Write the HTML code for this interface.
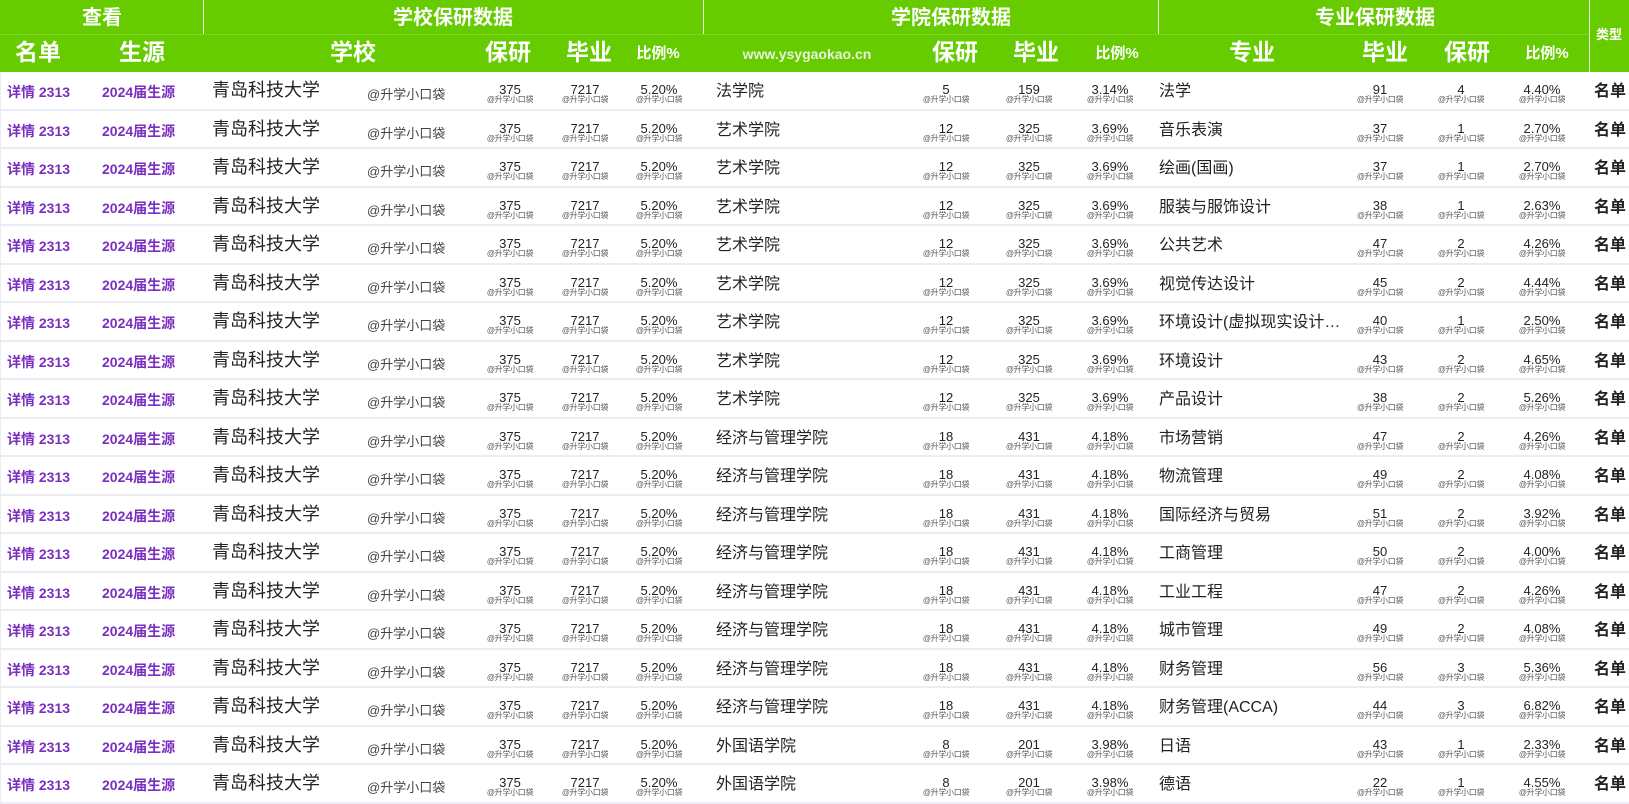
<!DOCTYPE html>
<html><head><meta charset="utf-8"><style>
*{margin:0;padding:0;box-sizing:border-box}
body{width:1629px;height:794px;overflow:hidden;background:#fff;font-family:"Liberation Sans","Noto Sans CJK SC",sans-serif;position:relative}
.g{position:absolute;background:#66cc00}
.h{position:absolute;color:#fff;font-weight:bold;transform:translateX(-50%);white-space:nowrap;line-height:1}
.vl{position:absolute;background:#e8f6dc;width:1px}
.r{position:absolute;left:0;width:1629px;height:38.5px;border-bottom:2px solid #ececf7;border-left:1px solid #ececf7}
.r span{position:absolute;white-space:nowrap;line-height:1}
.p{color:#7a2fc0;font-weight:bold;font-size:14px;top:13px}
.s{font-size:18px;color:#222;top:9px;left:211px}
.w{font-size:13px;color:#444;left:366px;top:16px}
.t{font-size:16px;color:#222;top:12px}
.n{transform:translateX(-50%);text-align:center;top:11px;font-size:13px;color:#222}
.n i{display:block;font-style:normal;font-size:8px;color:#555;margin-top:0px;letter-spacing:-0.3px}
.m{font-size:16px;font-weight:bold;color:#222;left:1593px;top:12px}
</style></head><body>
<div class="g" style="left:0;top:0;width:1629px;height:72px"></div>
<div class="vl" style="left:203px;top:0;height:34px"></div>
<div class="vl" style="left:703px;top:0;height:34px"></div>
<div class="vl" style="left:1158px;top:0;height:34px"></div>
<div class="vl" style="left:1589px;top:0;height:72px"></div>
<div class="vl" style="left:0;top:34px;width:1589px;height:1px;background:#7fd62a"></div>
<div class="h" style="left:102px;top:8px;font-size:20px">查看</div>
<div class="h" style="left:453px;top:8px;font-size:20px">学校保研数据</div>
<div class="h" style="left:951px;top:8px;font-size:20px">学院保研数据</div>
<div class="h" style="left:1375px;top:8px;font-size:20px">专业保研数据</div>
<div class="h" style="left:1609px;top:28px;font-size:13px">类型</div>
<div class="h" style="left:38px;top:41px;font-size:23px">名单</div>
<div class="h" style="left:142px;top:41px;font-size:23px">生源</div>
<div class="h" style="left:353px;top:41px;font-size:23px">学校</div>
<div class="h" style="left:508px;top:41px;font-size:23px">保研</div>
<div class="h" style="left:589px;top:41px;font-size:23px">毕业</div>
<div class="h" style="left:658px;top:46px;font-size:15px">比例%</div>
<div class="h" style="left:807px;top:47px;font-size:14px;color:#e6f3da">www.ysygaokao.cn</div>
<div class="h" style="left:955px;top:41px;font-size:23px">保研</div>
<div class="h" style="left:1036px;top:41px;font-size:23px">毕业</div>
<div class="h" style="left:1117px;top:46px;font-size:15px">比例%</div>
<div class="h" style="left:1252px;top:41px;font-size:23px">专业</div>
<div class="h" style="left:1385px;top:41px;font-size:23px">毕业</div>
<div class="h" style="left:1467px;top:41px;font-size:23px">保研</div>
<div class="h" style="left:1547px;top:46px;font-size:15px">比例%</div>

<div class="r" style="top:72px"><span class="p" style="left:6px">详情 2313</span><span class="p" style="left:101px">2024届生源</span><span class="s">青岛科技大学</span><span class="w">@升学小口袋</span><span class="n" style="left:509px">375<i>@升学小口袋</i></span><span class="n" style="left:584px">7217<i>@升学小口袋</i></span><span class="n" style="left:658px">5.20%<i>@升学小口袋</i></span><span class="t" style="left:715px">法学院</span><span class="n" style="left:945px">5<i>@升学小口袋</i></span><span class="n" style="left:1028px">159<i>@升学小口袋</i></span><span class="n" style="left:1109px">3.14%<i>@升学小口袋</i></span><span class="t" style="left:1158px">法学</span><span class="n" style="left:1379px">91<i>@升学小口袋</i></span><span class="n" style="left:1460px">4<i>@升学小口袋</i></span><span class="n" style="left:1541px">4.40%<i>@升学小口袋</i></span><span class="m">名单</span></div>
<div class="r" style="top:110.5px"><span class="p" style="left:6px">详情 2313</span><span class="p" style="left:101px">2024届生源</span><span class="s">青岛科技大学</span><span class="w">@升学小口袋</span><span class="n" style="left:509px">375<i>@升学小口袋</i></span><span class="n" style="left:584px">7217<i>@升学小口袋</i></span><span class="n" style="left:658px">5.20%<i>@升学小口袋</i></span><span class="t" style="left:715px">艺术学院</span><span class="n" style="left:945px">12<i>@升学小口袋</i></span><span class="n" style="left:1028px">325<i>@升学小口袋</i></span><span class="n" style="left:1109px">3.69%<i>@升学小口袋</i></span><span class="t" style="left:1158px">音乐表演</span><span class="n" style="left:1379px">37<i>@升学小口袋</i></span><span class="n" style="left:1460px">1<i>@升学小口袋</i></span><span class="n" style="left:1541px">2.70%<i>@升学小口袋</i></span><span class="m">名单</span></div>
<div class="r" style="top:149px"><span class="p" style="left:6px">详情 2313</span><span class="p" style="left:101px">2024届生源</span><span class="s">青岛科技大学</span><span class="w">@升学小口袋</span><span class="n" style="left:509px">375<i>@升学小口袋</i></span><span class="n" style="left:584px">7217<i>@升学小口袋</i></span><span class="n" style="left:658px">5.20%<i>@升学小口袋</i></span><span class="t" style="left:715px">艺术学院</span><span class="n" style="left:945px">12<i>@升学小口袋</i></span><span class="n" style="left:1028px">325<i>@升学小口袋</i></span><span class="n" style="left:1109px">3.69%<i>@升学小口袋</i></span><span class="t" style="left:1158px">绘画(国画)</span><span class="n" style="left:1379px">37<i>@升学小口袋</i></span><span class="n" style="left:1460px">1<i>@升学小口袋</i></span><span class="n" style="left:1541px">2.70%<i>@升学小口袋</i></span><span class="m">名单</span></div>
<div class="r" style="top:187.5px"><span class="p" style="left:6px">详情 2313</span><span class="p" style="left:101px">2024届生源</span><span class="s">青岛科技大学</span><span class="w">@升学小口袋</span><span class="n" style="left:509px">375<i>@升学小口袋</i></span><span class="n" style="left:584px">7217<i>@升学小口袋</i></span><span class="n" style="left:658px">5.20%<i>@升学小口袋</i></span><span class="t" style="left:715px">艺术学院</span><span class="n" style="left:945px">12<i>@升学小口袋</i></span><span class="n" style="left:1028px">325<i>@升学小口袋</i></span><span class="n" style="left:1109px">3.69%<i>@升学小口袋</i></span><span class="t" style="left:1158px">服装与服饰设计</span><span class="n" style="left:1379px">38<i>@升学小口袋</i></span><span class="n" style="left:1460px">1<i>@升学小口袋</i></span><span class="n" style="left:1541px">2.63%<i>@升学小口袋</i></span><span class="m">名单</span></div>
<div class="r" style="top:226px"><span class="p" style="left:6px">详情 2313</span><span class="p" style="left:101px">2024届生源</span><span class="s">青岛科技大学</span><span class="w">@升学小口袋</span><span class="n" style="left:509px">375<i>@升学小口袋</i></span><span class="n" style="left:584px">7217<i>@升学小口袋</i></span><span class="n" style="left:658px">5.20%<i>@升学小口袋</i></span><span class="t" style="left:715px">艺术学院</span><span class="n" style="left:945px">12<i>@升学小口袋</i></span><span class="n" style="left:1028px">325<i>@升学小口袋</i></span><span class="n" style="left:1109px">3.69%<i>@升学小口袋</i></span><span class="t" style="left:1158px">公共艺术</span><span class="n" style="left:1379px">47<i>@升学小口袋</i></span><span class="n" style="left:1460px">2<i>@升学小口袋</i></span><span class="n" style="left:1541px">4.26%<i>@升学小口袋</i></span><span class="m">名单</span></div>
<div class="r" style="top:264.5px"><span class="p" style="left:6px">详情 2313</span><span class="p" style="left:101px">2024届生源</span><span class="s">青岛科技大学</span><span class="w">@升学小口袋</span><span class="n" style="left:509px">375<i>@升学小口袋</i></span><span class="n" style="left:584px">7217<i>@升学小口袋</i></span><span class="n" style="left:658px">5.20%<i>@升学小口袋</i></span><span class="t" style="left:715px">艺术学院</span><span class="n" style="left:945px">12<i>@升学小口袋</i></span><span class="n" style="left:1028px">325<i>@升学小口袋</i></span><span class="n" style="left:1109px">3.69%<i>@升学小口袋</i></span><span class="t" style="left:1158px">视觉传达设计</span><span class="n" style="left:1379px">45<i>@升学小口袋</i></span><span class="n" style="left:1460px">2<i>@升学小口袋</i></span><span class="n" style="left:1541px">4.44%<i>@升学小口袋</i></span><span class="m">名单</span></div>
<div class="r" style="top:303px"><span class="p" style="left:6px">详情 2313</span><span class="p" style="left:101px">2024届生源</span><span class="s">青岛科技大学</span><span class="w">@升学小口袋</span><span class="n" style="left:509px">375<i>@升学小口袋</i></span><span class="n" style="left:584px">7217<i>@升学小口袋</i></span><span class="n" style="left:658px">5.20%<i>@升学小口袋</i></span><span class="t" style="left:715px">艺术学院</span><span class="n" style="left:945px">12<i>@升学小口袋</i></span><span class="n" style="left:1028px">325<i>@升学小口袋</i></span><span class="n" style="left:1109px">3.69%<i>@升学小口袋</i></span><span class="t" style="left:1158px">环境设计(虚拟现实设计…</span><span class="n" style="left:1379px">40<i>@升学小口袋</i></span><span class="n" style="left:1460px">1<i>@升学小口袋</i></span><span class="n" style="left:1541px">2.50%<i>@升学小口袋</i></span><span class="m">名单</span></div>
<div class="r" style="top:341.5px"><span class="p" style="left:6px">详情 2313</span><span class="p" style="left:101px">2024届生源</span><span class="s">青岛科技大学</span><span class="w">@升学小口袋</span><span class="n" style="left:509px">375<i>@升学小口袋</i></span><span class="n" style="left:584px">7217<i>@升学小口袋</i></span><span class="n" style="left:658px">5.20%<i>@升学小口袋</i></span><span class="t" style="left:715px">艺术学院</span><span class="n" style="left:945px">12<i>@升学小口袋</i></span><span class="n" style="left:1028px">325<i>@升学小口袋</i></span><span class="n" style="left:1109px">3.69%<i>@升学小口袋</i></span><span class="t" style="left:1158px">环境设计</span><span class="n" style="left:1379px">43<i>@升学小口袋</i></span><span class="n" style="left:1460px">2<i>@升学小口袋</i></span><span class="n" style="left:1541px">4.65%<i>@升学小口袋</i></span><span class="m">名单</span></div>
<div class="r" style="top:380px"><span class="p" style="left:6px">详情 2313</span><span class="p" style="left:101px">2024届生源</span><span class="s">青岛科技大学</span><span class="w">@升学小口袋</span><span class="n" style="left:509px">375<i>@升学小口袋</i></span><span class="n" style="left:584px">7217<i>@升学小口袋</i></span><span class="n" style="left:658px">5.20%<i>@升学小口袋</i></span><span class="t" style="left:715px">艺术学院</span><span class="n" style="left:945px">12<i>@升学小口袋</i></span><span class="n" style="left:1028px">325<i>@升学小口袋</i></span><span class="n" style="left:1109px">3.69%<i>@升学小口袋</i></span><span class="t" style="left:1158px">产品设计</span><span class="n" style="left:1379px">38<i>@升学小口袋</i></span><span class="n" style="left:1460px">2<i>@升学小口袋</i></span><span class="n" style="left:1541px">5.26%<i>@升学小口袋</i></span><span class="m">名单</span></div>
<div class="r" style="top:418.5px"><span class="p" style="left:6px">详情 2313</span><span class="p" style="left:101px">2024届生源</span><span class="s">青岛科技大学</span><span class="w">@升学小口袋</span><span class="n" style="left:509px">375<i>@升学小口袋</i></span><span class="n" style="left:584px">7217<i>@升学小口袋</i></span><span class="n" style="left:658px">5.20%<i>@升学小口袋</i></span><span class="t" style="left:715px">经济与管理学院</span><span class="n" style="left:945px">18<i>@升学小口袋</i></span><span class="n" style="left:1028px">431<i>@升学小口袋</i></span><span class="n" style="left:1109px">4.18%<i>@升学小口袋</i></span><span class="t" style="left:1158px">市场营销</span><span class="n" style="left:1379px">47<i>@升学小口袋</i></span><span class="n" style="left:1460px">2<i>@升学小口袋</i></span><span class="n" style="left:1541px">4.26%<i>@升学小口袋</i></span><span class="m">名单</span></div>
<div class="r" style="top:457px"><span class="p" style="left:6px">详情 2313</span><span class="p" style="left:101px">2024届生源</span><span class="s">青岛科技大学</span><span class="w">@升学小口袋</span><span class="n" style="left:509px">375<i>@升学小口袋</i></span><span class="n" style="left:584px">7217<i>@升学小口袋</i></span><span class="n" style="left:658px">5.20%<i>@升学小口袋</i></span><span class="t" style="left:715px">经济与管理学院</span><span class="n" style="left:945px">18<i>@升学小口袋</i></span><span class="n" style="left:1028px">431<i>@升学小口袋</i></span><span class="n" style="left:1109px">4.18%<i>@升学小口袋</i></span><span class="t" style="left:1158px">物流管理</span><span class="n" style="left:1379px">49<i>@升学小口袋</i></span><span class="n" style="left:1460px">2<i>@升学小口袋</i></span><span class="n" style="left:1541px">4.08%<i>@升学小口袋</i></span><span class="m">名单</span></div>
<div class="r" style="top:495.5px"><span class="p" style="left:6px">详情 2313</span><span class="p" style="left:101px">2024届生源</span><span class="s">青岛科技大学</span><span class="w">@升学小口袋</span><span class="n" style="left:509px">375<i>@升学小口袋</i></span><span class="n" style="left:584px">7217<i>@升学小口袋</i></span><span class="n" style="left:658px">5.20%<i>@升学小口袋</i></span><span class="t" style="left:715px">经济与管理学院</span><span class="n" style="left:945px">18<i>@升学小口袋</i></span><span class="n" style="left:1028px">431<i>@升学小口袋</i></span><span class="n" style="left:1109px">4.18%<i>@升学小口袋</i></span><span class="t" style="left:1158px">国际经济与贸易</span><span class="n" style="left:1379px">51<i>@升学小口袋</i></span><span class="n" style="left:1460px">2<i>@升学小口袋</i></span><span class="n" style="left:1541px">3.92%<i>@升学小口袋</i></span><span class="m">名单</span></div>
<div class="r" style="top:534px"><span class="p" style="left:6px">详情 2313</span><span class="p" style="left:101px">2024届生源</span><span class="s">青岛科技大学</span><span class="w">@升学小口袋</span><span class="n" style="left:509px">375<i>@升学小口袋</i></span><span class="n" style="left:584px">7217<i>@升学小口袋</i></span><span class="n" style="left:658px">5.20%<i>@升学小口袋</i></span><span class="t" style="left:715px">经济与管理学院</span><span class="n" style="left:945px">18<i>@升学小口袋</i></span><span class="n" style="left:1028px">431<i>@升学小口袋</i></span><span class="n" style="left:1109px">4.18%<i>@升学小口袋</i></span><span class="t" style="left:1158px">工商管理</span><span class="n" style="left:1379px">50<i>@升学小口袋</i></span><span class="n" style="left:1460px">2<i>@升学小口袋</i></span><span class="n" style="left:1541px">4.00%<i>@升学小口袋</i></span><span class="m">名单</span></div>
<div class="r" style="top:572.5px"><span class="p" style="left:6px">详情 2313</span><span class="p" style="left:101px">2024届生源</span><span class="s">青岛科技大学</span><span class="w">@升学小口袋</span><span class="n" style="left:509px">375<i>@升学小口袋</i></span><span class="n" style="left:584px">7217<i>@升学小口袋</i></span><span class="n" style="left:658px">5.20%<i>@升学小口袋</i></span><span class="t" style="left:715px">经济与管理学院</span><span class="n" style="left:945px">18<i>@升学小口袋</i></span><span class="n" style="left:1028px">431<i>@升学小口袋</i></span><span class="n" style="left:1109px">4.18%<i>@升学小口袋</i></span><span class="t" style="left:1158px">工业工程</span><span class="n" style="left:1379px">47<i>@升学小口袋</i></span><span class="n" style="left:1460px">2<i>@升学小口袋</i></span><span class="n" style="left:1541px">4.26%<i>@升学小口袋</i></span><span class="m">名单</span></div>
<div class="r" style="top:611px"><span class="p" style="left:6px">详情 2313</span><span class="p" style="left:101px">2024届生源</span><span class="s">青岛科技大学</span><span class="w">@升学小口袋</span><span class="n" style="left:509px">375<i>@升学小口袋</i></span><span class="n" style="left:584px">7217<i>@升学小口袋</i></span><span class="n" style="left:658px">5.20%<i>@升学小口袋</i></span><span class="t" style="left:715px">经济与管理学院</span><span class="n" style="left:945px">18<i>@升学小口袋</i></span><span class="n" style="left:1028px">431<i>@升学小口袋</i></span><span class="n" style="left:1109px">4.18%<i>@升学小口袋</i></span><span class="t" style="left:1158px">城市管理</span><span class="n" style="left:1379px">49<i>@升学小口袋</i></span><span class="n" style="left:1460px">2<i>@升学小口袋</i></span><span class="n" style="left:1541px">4.08%<i>@升学小口袋</i></span><span class="m">名单</span></div>
<div class="r" style="top:649.5px"><span class="p" style="left:6px">详情 2313</span><span class="p" style="left:101px">2024届生源</span><span class="s">青岛科技大学</span><span class="w">@升学小口袋</span><span class="n" style="left:509px">375<i>@升学小口袋</i></span><span class="n" style="left:584px">7217<i>@升学小口袋</i></span><span class="n" style="left:658px">5.20%<i>@升学小口袋</i></span><span class="t" style="left:715px">经济与管理学院</span><span class="n" style="left:945px">18<i>@升学小口袋</i></span><span class="n" style="left:1028px">431<i>@升学小口袋</i></span><span class="n" style="left:1109px">4.18%<i>@升学小口袋</i></span><span class="t" style="left:1158px">财务管理</span><span class="n" style="left:1379px">56<i>@升学小口袋</i></span><span class="n" style="left:1460px">3<i>@升学小口袋</i></span><span class="n" style="left:1541px">5.36%<i>@升学小口袋</i></span><span class="m">名单</span></div>
<div class="r" style="top:688px"><span class="p" style="left:6px">详情 2313</span><span class="p" style="left:101px">2024届生源</span><span class="s">青岛科技大学</span><span class="w">@升学小口袋</span><span class="n" style="left:509px">375<i>@升学小口袋</i></span><span class="n" style="left:584px">7217<i>@升学小口袋</i></span><span class="n" style="left:658px">5.20%<i>@升学小口袋</i></span><span class="t" style="left:715px">经济与管理学院</span><span class="n" style="left:945px">18<i>@升学小口袋</i></span><span class="n" style="left:1028px">431<i>@升学小口袋</i></span><span class="n" style="left:1109px">4.18%<i>@升学小口袋</i></span><span class="t" style="left:1158px">财务管理(ACCA)</span><span class="n" style="left:1379px">44<i>@升学小口袋</i></span><span class="n" style="left:1460px">3<i>@升学小口袋</i></span><span class="n" style="left:1541px">6.82%<i>@升学小口袋</i></span><span class="m">名单</span></div>
<div class="r" style="top:726.5px"><span class="p" style="left:6px">详情 2313</span><span class="p" style="left:101px">2024届生源</span><span class="s">青岛科技大学</span><span class="w">@升学小口袋</span><span class="n" style="left:509px">375<i>@升学小口袋</i></span><span class="n" style="left:584px">7217<i>@升学小口袋</i></span><span class="n" style="left:658px">5.20%<i>@升学小口袋</i></span><span class="t" style="left:715px">外国语学院</span><span class="n" style="left:945px">8<i>@升学小口袋</i></span><span class="n" style="left:1028px">201<i>@升学小口袋</i></span><span class="n" style="left:1109px">3.98%<i>@升学小口袋</i></span><span class="t" style="left:1158px">日语</span><span class="n" style="left:1379px">43<i>@升学小口袋</i></span><span class="n" style="left:1460px">1<i>@升学小口袋</i></span><span class="n" style="left:1541px">2.33%<i>@升学小口袋</i></span><span class="m">名单</span></div>
<div class="r" style="top:765px"><span class="p" style="left:6px">详情 2313</span><span class="p" style="left:101px">2024届生源</span><span class="s">青岛科技大学</span><span class="w">@升学小口袋</span><span class="n" style="left:509px">375<i>@升学小口袋</i></span><span class="n" style="left:584px">7217<i>@升学小口袋</i></span><span class="n" style="left:658px">5.20%<i>@升学小口袋</i></span><span class="t" style="left:715px">外国语学院</span><span class="n" style="left:945px">8<i>@升学小口袋</i></span><span class="n" style="left:1028px">201<i>@升学小口袋</i></span><span class="n" style="left:1109px">3.98%<i>@升学小口袋</i></span><span class="t" style="left:1158px">德语</span><span class="n" style="left:1379px">22<i>@升学小口袋</i></span><span class="n" style="left:1460px">1<i>@升学小口袋</i></span><span class="n" style="left:1541px">4.55%<i>@升学小口袋</i></span><span class="m">名单</span></div>
</body></html>
